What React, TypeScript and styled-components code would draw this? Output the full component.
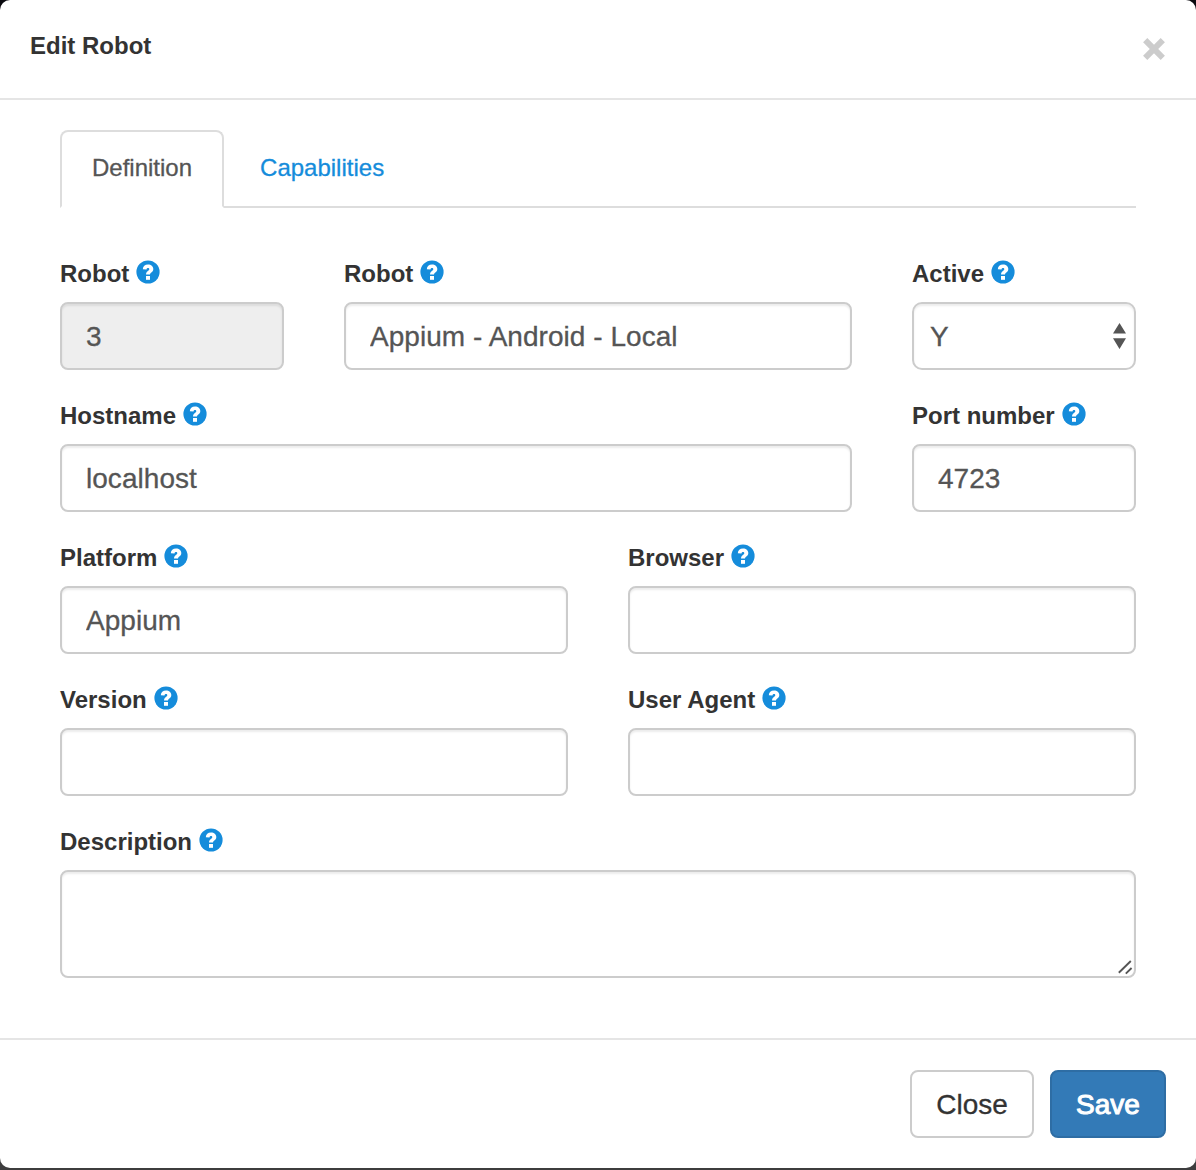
import React from "react";
import styled, { createGlobalStyle } from "styled-components";

const Global = createGlobalStyle`
  *, *::before, *::after { box-sizing: border-box; }
  html, body { margin: 0; padding: 0; overflow: hidden; }
  body {
    background: linear-gradient(#0b0a10 0 50%, #3d3d3e 50%);
    font-family: "Liberation Sans", Arial, sans-serif;
    color: #333;
  }
`;

const Dialog = styled.section`
  display: flex;
  flex-direction: column;
  width: 1196px;
  height: 1168px;
  margin-bottom: 2px;
  background: #fff;
  border-radius: 10px;
`;

const Header = styled.header`
  display: flex;
  justify-content: space-between;
  height: 100px;
  padding: 30px;
  border-bottom: 2px solid #e5e5e5;
`;

const Title = styled.h4`
  margin: 0;
  font-size: 24px;
  line-height: 32px;
  font-weight: 700;
`;

const Dismiss = styled.button`
  display: flex;
  align-items: flex-start;
  height: 38px;
  padding: 7px 0 0;
  border: 0;
  background: none;
`;

const Body = styled.main`
  flex: 1;
  padding: 30px 60px 0;
`;

const Tabs = styled.nav`
  display: flex;
  height: 78px;
  border-bottom: 2px solid #ddd;
`;

const Tab = styled.a<{ $active?: boolean }>`
  height: 78px;
  margin-right: 4px;
  padding: 19px 30px;
  font-size: 24px;
  line-height: 34px;
  color: ${(p) => (p.$active ? "#555" : "#158cdb")};
  -webkit-text-stroke: 0.3px currentColor;
  border: 2px solid ${(p) => (p.$active ? "#ddd" : "transparent")};
  border-bottom-color: ${(p) => (p.$active ? "#fff" : "transparent")};
  border-radius: 8px 8px 0 0;
`;

const Form = styled.form`
  display: grid;
  gap: 28px;
  margin-top: 48px;
`;

const Row = styled.div<{ $cols: string }>`
  display: grid;
  grid-template-columns: ${(p) => p.$cols};
  column-gap: 60px;
`;

const Group = styled.div`
  display: flex;
  flex-direction: column;
  min-width: 0;
`;

const Label = styled.label`
  display: flex;
  gap: 7px;
  height: 46px;
  font-size: 24px;
  line-height: 35px;
  font-weight: 700;
  white-space: nowrap;

  svg { flex: none; margin-top: 4px; }
`;

const Control = styled.input`
  width: 100%;
  height: 68px;
  padding: 2px 24px 0;
  border: 2px solid #ccc;
  border-radius: 8px;
  outline: 0;
  background: #fff;
  box-shadow: inset 0 2px 2px rgba(0, 0, 0, 0.075);
  font: 28px "Liberation Sans", Arial, sans-serif;
  letter-spacing: 0.04px;
  color: #555;
  -webkit-text-stroke: 0.3px currentColor;

  &:read-only { background: #eee; }
`;

const SelectBox = styled.div`
  display: flex;
  align-items: center;
  justify-content: space-between;
  height: 68px;
  padding: 0 8px 0 16px;
  border: 2px solid #ccc;
  border-radius: 10px;
  background: #fff;
  box-shadow: inset 0 2px 2px rgba(0, 0, 0, 0.075);
  font-size: 28px;
  color: #555;
  -webkit-text-stroke: 0.3px currentColor;
`;

const Choice = styled.span`
  padding-top: 2px;
`;

const Area = styled.div`
  display: flex;
  align-items: flex-end;
  justify-content: flex-end;
  height: 108px;
  border: 2px solid #ccc;
  border-radius: 8px;
  background: #fff;
  box-shadow: inset 0 2px 2px rgba(0, 0, 0, 0.075);
`;

const Footer = styled.footer`
  display: flex;
  justify-content: flex-end;
  gap: 16px;
  height: 130px;
  padding: 30px;
  border-top: 2px solid #e5e5e5;
`;

const Button = styled.button<{ $primary?: boolean }>`
  width: ${(p) => (p.$primary ? "116px" : "124px")};
  height: 68px;
  padding: 2px 0 0;
  border: 2px solid ${(p) => (p.$primary ? "#2e6da4" : "#ccc")};
  border-radius: 8px;
  background: ${(p) => (p.$primary ? "#337ab7" : "#fff")};
  color: ${(p) => (p.$primary ? "#fff" : "#333")};
  font: 28px "Liberation Sans", Arial, sans-serif;
  -webkit-text-stroke: ${(p) => (p.$primary ? "1px" : "0.3px")} currentColor;
`;

const HelpIcon = () => (
  <svg width="24" height="24" viewBox="0 0 24 24">
    <circle cx="12" cy="12" r="11.6" fill="#158cdb" />
    <path
      d="M6.8 9.3C6.9 6.2 8.9 4.4 12 4.4c3.1 0 5.3 1.8 5.3 4.5 0 3.4-3.3 3.5-3.3 5.6h-4c0-3.4 3.3-3.6 3.3-5.3 0-.8-.5-1.2-1.3-1.2-.9 0-1.4.5-1.5 1.5z"
      fill="#fff"
    />
    <rect x="10" y="16" width="4" height="3.8" fill="#fff" />
  </svg>
);

const CloseIcon = () => (
  <svg width="24" height="24" viewBox="0 0 24 24">
    <path d="M3.2 3.2l17.6 17.6M20.8 3.2L3.2 20.8" stroke="#ccc" strokeWidth="6" />
  </svg>
);

const Arrows = () => (
  <svg width="13" height="26" viewBox="0 0 13 26">
    <path d="M0 10.5L6.5 0 13 10.5zM0 15.2h13L6.5 26z" fill="#555" />
  </svg>
);

const Grip = () => (
  <svg width="18" height="18" viewBox="0 0 18 18">
    <path d="M2.8 14.8L14.8 3M9.8 15.6L15.6 10" stroke="#555" strokeWidth="1.9" />
  </svg>
);

const Field = ({ label, children }: { label: string; children: React.ReactNode }) => (
  <Group>
    <Label>
      {label}
      <HelpIcon />
    </Label>
    {children}
  </Group>
);

const Text = ({ label, value = "", locked }: { label: string; value?: string; locked?: boolean }) => (
  <Field label={label}>
    <Control defaultValue={value} readOnly={locked} />
  </Field>
);

export default function App() {
  return (
    <>
      <Global />
      <Dialog>
        <Header>
          <Title>Edit Robot</Title>
          <Dismiss aria-label="Close">
            <CloseIcon />
          </Dismiss>
        </Header>
        <Body>
          <Tabs>
            <Tab $active>Definition</Tab>
            <Tab>Capabilities</Tab>
          </Tabs>
          <Form>
            <Row $cols="224px 508px 224px">
              <Text label="Robot" value="3" locked />
              <Text label="Robot" value="Appium - Android - Local" />
              <Field label="Active">
                <SelectBox>
                  <Choice>Y</Choice>
                  <Arrows />
                </SelectBox>
              </Field>
            </Row>
            <Row $cols="792px 224px">
              <Text label="Hostname" value="localhost" />
              <Text label="Port number" value="4723" />
            </Row>
            <Row $cols="508px 508px">
              <Text label="Platform" value="Appium" />
              <Text label="Browser" />
            </Row>
            <Row $cols="508px 508px">
              <Text label="Version" />
              <Text label="User Agent" />
            </Row>
            <Row $cols="1076px">
              <Field label="Description">
                <Area>
                  <Grip />
                </Area>
              </Field>
            </Row>
          </Form>
        </Body>
        <Footer>
          <Button>Close</Button>
          <Button $primary>Save</Button>
        </Footer>
      </Dialog>
    </>
  );
}
